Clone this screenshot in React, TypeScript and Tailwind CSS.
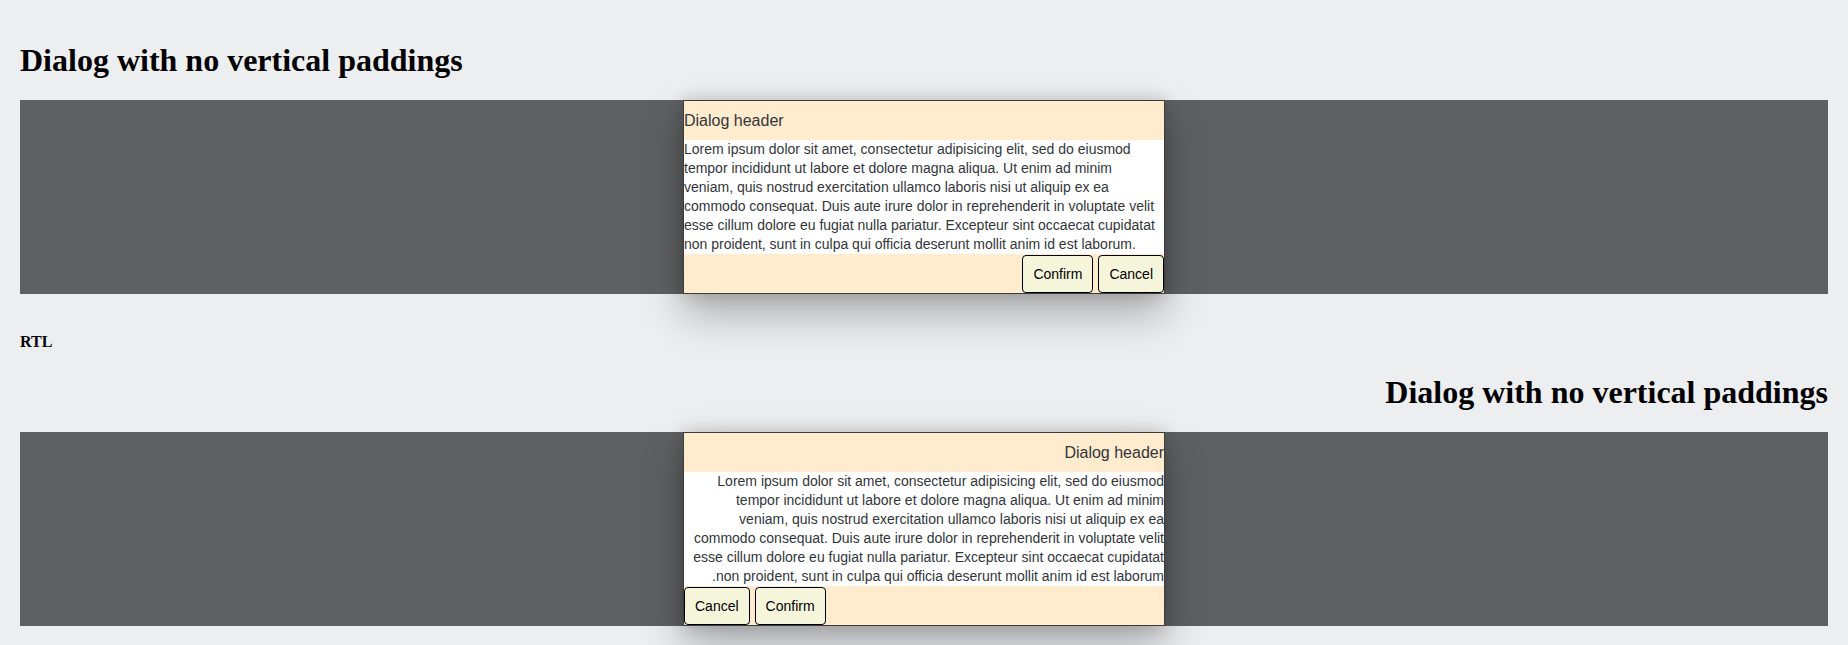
import React from "react";

const lorem = [
  "Lorem ipsum dolor sit amet, consectetur adipisicing elit, sed do eiusmod",
  "tempor incididunt ut labore et dolore magna aliqua. Ut enim ad minim",
  "veniam, quis nostrud exercitation ullamco laboris nisi ut aliquip ex ea",
  "commodo consequat. Duis aute irure dolor in reprehenderit in voluptate velit",
  "esse cillum dolore eu fugiat nulla pariatur. Excepteur sint occaecat cupidatat",
  "non proident, sunt in culpa qui officia deserunt mollit anim id est laborum.",
];

const DialogButton = ({ children }: { children: React.ReactNode }) => (
  <button className="h-[38px] px-[10px] border border-black rounded-[4px] bg-[#f5f5dc] text-[14px] text-black font-['Liberation_Sans',Arial,sans-serif]">
    {children}
  </button>
);

const Dialog = () => {
  return (
    <div className="w-[482px] border border-[#3c3c3c] shadow-[0_0_16px_rgba(0,0,0,0.18),0_20px_40px_rgba(0,0,0,0.28)] font-['Liberation_Sans',Arial,sans-serif] text-[#32363a]">
      <header className="h-[39px] flex items-center bg-[#ffebcd] text-[16px] whitespace-nowrap overflow-hidden">
        Dialog header
      </header>
      <div className="bg-white text-[14px] leading-[19px]">
        {lorem.map((line, i) => (
          <React.Fragment key={i}>
            {line}
            {i < lorem.length - 1 && <br />}
          </React.Fragment>
        ))}
      </div>
      <footer className="h-[39px] pt-px flex items-start justify-end gap-[5px] bg-[#ffebcd]">
        <DialogButton>Confirm</DialogButton>
        <DialogButton>Cancel</DialogButton>
      </footer>
    </div>
  );
};

const Section = ({ rtl }: { rtl?: boolean }) => (
  <section dir={rtl ? "rtl" : "ltr"}>
    <h1 className="mb-[21px] text-[32px] leading-[37px] font-bold">
      Dialog with no vertical paddings
    </h1>
    <div className="flex justify-center bg-[#5f6062]">
      <Dialog />
    </div>
  </section>
);

export default function App() {
  return (
    <div className="min-h-screen bg-[#edeef0] px-5 pt-[42px] text-black font-['Liberation_Serif','Times_New_Roman',serif]">
      <Section />
      <div className="mt-[39px] mb-[23px] text-[16px] leading-[18px] font-bold">RTL</div>
      <Section rtl />
    </div>
  );
}
